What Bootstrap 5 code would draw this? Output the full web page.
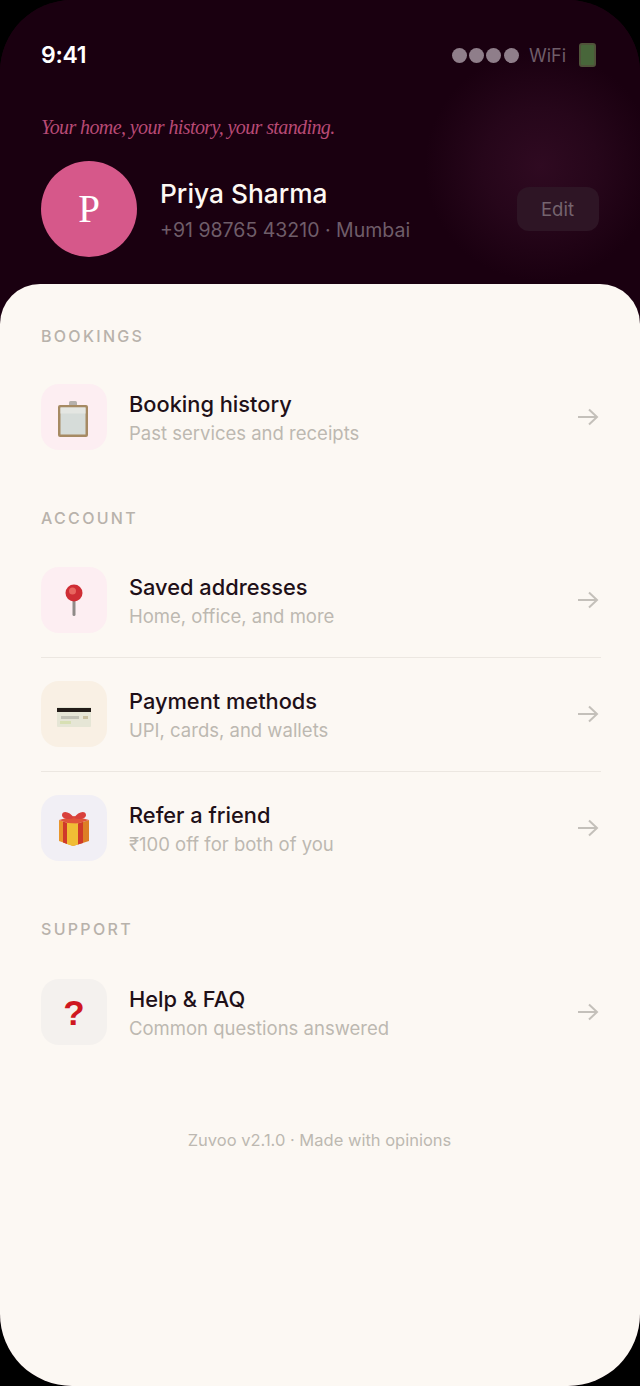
<!DOCTYPE html>
<html lang="en">
<head>
  <meta charset="UTF-8">
  <meta name="viewport" content="width=device-width, initial-scale=1.0">
  <title>Profile - Zuvoo</title>
  <link href="https://cdn.jsdelivr.net/npm/bootstrap@5.3.2/dist/css/bootstrap.min.css" rel="stylesheet">
  <style>
    html, body { height: 100%; }
    body { background: #000; font-family: "Inter", "Liberation Sans", sans-serif; }
    .phone-frame {
      width: 640px; height: 1386px; border-radius: 72px; overflow: hidden;
      background: #1a0010;
    }
    .profile-head {
      height: 284px; padding: 0 41px;
      background: radial-gradient(circle 115px at 540px 166px, #2f0a21 0%, #26061a 50%, #1a0010 100%);
    }
    .status-row { height: 110px; padding-top: 38px; color: #fff; }
    .status-time { font-size: 23px; font-weight: 600; line-height: 34px; letter-spacing: -.3px; }
    .status-icons { height: 34px; }
    .status-dot { width: 15px; height: 15px; border-radius: 50%; background: #8f7e8a; margin-right: 2.3px; }
    .status-wifi { font-size: 18px; color: #6f5d69; margin: 0 13px 0 8px; }
    .status-batt { width: 17px; height: 24px; margin-right: 3px; border-radius: 3px; background: #48663a; border: 2px solid #50533a; }
    .tagline { font-family: "Liberation Serif", serif; font-style: italic; font-size: 20px; letter-spacing: -.6px; line-height: 34px; color: #b84a75; margin-bottom: 17px; }
    .avatar-circle {
      width: 96px; height: 96px; border-radius: 50%; background: #d6588a; color: #fff;
      font-family: "Liberation Serif", serif; font-size: 39px; flex-shrink: 0;
    }
    .user-block { margin-left: 23px; padding-top: 4px; }
    .user-name { font-size: 26.300px; font-weight: 500; color: #fdf8f3; line-height: 34px; }
    .user-meta { font-size: 19.500px; color: #6f5d69; line-height: 30px; margin-top: 4px; }
    .edit-btn {
      width: 82px; height: 44px; border-radius: 12px; border: 0; padding: 1px 1px 0 0;
      background: #2e1525; color: #75646f; font-size: 18.500px;
    }
    .sheet {
      height: 1102px; background: #fcf8f3; border-radius: 40px 40px 0 0; padding: 40px 39px 0 41px;
    }
    .section-label { font-size: 16px; font-weight: 500; letter-spacing: 2.300px; line-height: 24px; color: #b8b2ab; margin-bottom: 12px; }
    .section-gap { margin-top: 32px; }
    .label-account { margin-bottom: 13px; }
    .label-support { margin-bottom: 14px; }
    .menu-row { height: 114px; padding: 24px 0; }
    .menu-row + .menu-row { border-top: 1px solid #ece7e1; padding-top: 23px; }
    .menu-icon { width: 66px; height: 66px; border-radius: 18px; margin-right: 22px; flex-shrink: 0; }
    .tint-pink { background: #fdeef2; }
    .tint-sand { background: #f9f0e4; }
    .tint-lilac { background: #f1eff5; }
    .tint-grey { background: #f4f1ee; }
    .menu-text { padding-top: 2px; }
    .menu-title { font-size: 21.800px; font-weight: 500; color: #1f1018; line-height: 30px; }
    .menu-sub { font-size: 18.500px; color: #bdb8b1; line-height: 28px; }
    .menu-arrow { margin-right: 2px; }
    .question-mark { font-family: "Liberation Sans", sans-serif; font-weight: 700; font-size: 35px; color: #cf1720; line-height: 1; }
    .nudge-clip { margin: 4px 3px 0 0; }
    .nudge-card { margin-top: 6px; }
    .foot-note { font-size: 16.500px; color: #bdb8b1; margin-top: 59px; line-height: 24px; padding-right: 3px; }
  </style>
</head>
<body>
  <div class="phone-frame">
    <!-- Dark header -->
    <div class="profile-head">
      <div class="status-row d-flex justify-content-between align-items-start">
        <span class="status-time">9:41</span>
        <div class="status-icons d-flex align-items-center">
          <span class="status-dot"></span>
          <span class="status-dot"></span>
          <span class="status-dot"></span>
          <span class="status-dot"></span>
          <span class="status-wifi">WiFi</span>
          <span class="status-batt"></span>
        </div>
      </div>
      <div class="tagline">Your home, your history, your standing.</div>
      <div class="d-flex align-items-center">
        <div class="avatar-circle d-flex align-items-center justify-content-center">P</div>
        <div class="user-block flex-grow-1">
          <div class="user-name">Priya Sharma</div>
          <div class="user-meta">+91 98765 43210 · Mumbai</div>
        </div>
        <button class="edit-btn" type="button">Edit</button>
      </div>
    </div>

    <!-- Menu sheet -->
    <div class="sheet">
      <div class="section-label">BOOKINGS</div>
      <div class="menu-row d-flex align-items-center">
        <div class="menu-icon tint-pink d-flex align-items-center justify-content-center">
          <svg class="nudge-clip" width="30" height="36" viewBox="0 0 30 36">
            <rect x="11" y="0" width="8" height="6" rx="1.500" fill="#b5b0ac"/>
            <rect x="0" y="4" width="30" height="32" rx="2" fill="#a68a63"/>
            <rect x="2.500" y="6.500" width="25" height="27" fill="#d6dcd9"/>
            <rect x="2.500" y="6.500" width="25" height="6" fill="#e4e6e2"/>
          </svg>
        </div>
        <div class="menu-text flex-grow-1">
          <div class="menu-title">Booking history</div>
          <div class="menu-sub">Past services and receipts</div>
        </div>
        <svg class="menu-arrow" width="21" height="18" viewBox="0 0 21 18" fill="none" stroke="#c4c0ba" stroke-width="2"><path d="M0 9h19M11 1.500l8 7.500-8 7.500"/></svg>
      </div>

      <div class="section-label section-gap label-account">ACCOUNT</div>
      <div class="menu-row d-flex align-items-center">
        <div class="menu-icon tint-pink d-flex align-items-center justify-content-center">
          <svg width="20" height="32" viewBox="0 0 20 32">
            <rect x="8.500" y="14" width="3" height="18" rx="1.500" fill="#8f8a88"/>
            <circle cx="10" cy="9" r="8.500" fill="#cf2d35"/>
            <circle cx="8.500" cy="7" r="3.500" fill="#e8655f"/>
          </svg>
        </div>
        <div class="menu-text flex-grow-1">
          <div class="menu-title">Saved addresses</div>
          <div class="menu-sub">Home, office, and more</div>
        </div>
        <svg class="menu-arrow" width="21" height="18" viewBox="0 0 21 18" fill="none" stroke="#c4c0ba" stroke-width="2"><path d="M0 9h19M11 1.500l8 7.500-8 7.500"/></svg>
      </div>
      <div class="menu-row d-flex align-items-center">
        <div class="menu-icon tint-sand d-flex align-items-center justify-content-center">
          <svg class="nudge-card" width="34" height="20" viewBox="0 0 34 20">
            <rect x="0" y="0" width="34" height="20" rx="1" fill="#e6e6d6"/>
            <rect x="0" y="1" width="34" height="4" fill="#231c18"/>
            <rect x="4" y="9" width="18" height="3" fill="#c2c2b6"/>
            <rect x="26" y="9" width="5" height="3" fill="#c8bf9f"/>
            <rect x="3" y="14" width="11" height="3" fill="#d8e0b4"/>
          </svg>
        </div>
        <div class="menu-text flex-grow-1">
          <div class="menu-title">Payment methods</div>
          <div class="menu-sub">UPI, cards, and wallets</div>
        </div>
        <svg class="menu-arrow" width="21" height="18" viewBox="0 0 21 18" fill="none" stroke="#c4c0ba" stroke-width="2"><path d="M0 9h19M11 1.500l8 7.500-8 7.500"/></svg>
      </div>
      <div class="menu-row d-flex align-items-center">
        <div class="menu-icon tint-lilac d-flex align-items-center justify-content-center">
          <svg width="32" height="36" viewBox="0 0 32 36">
            <path d="M1 10l14 5v21l-14-5z" fill="#e9962c"/>
            <path d="M15 15l16-5v21l-16 5z" fill="#dd7f26"/>
            <path d="M1 10l15-4 15 4-16 5z" fill="#e0543a"/>
            <path d="M5 11.500l4 1.500v21l-4-1.500zM20 13.500l5-1.500v21l-5 1.500z" fill="#cf3a2a"/>
            <path d="M9 13l11 .5v21l-5 1.500-6-2z" fill="#f0bd35"/>
            <path d="M16 8c-4-7-12-8-12-3 0 4 7 5 12 3 5 2 12 1 12-3 0-5-8-4-12 3z" fill="#d9403c"/>
          </svg>
        </div>
        <div class="menu-text flex-grow-1">
          <div class="menu-title">Refer a friend</div>
          <div class="menu-sub">₹100 off for both of you</div>
        </div>
        <svg class="menu-arrow" width="21" height="18" viewBox="0 0 21 18" fill="none" stroke="#c4c0ba" stroke-width="2"><path d="M0 9h19M11 1.500l8 7.500-8 7.500"/></svg>
      </div>

      <div class="section-label section-gap label-support">SUPPORT</div>
      <div class="menu-row d-flex align-items-center">
        <div class="menu-icon tint-grey d-flex align-items-center justify-content-center">
          <span class="question-mark">?</span>
        </div>
        <div class="menu-text flex-grow-1">
          <div class="menu-title">Help &amp; FAQ</div>
          <div class="menu-sub">Common questions answered</div>
        </div>
        <svg class="menu-arrow" width="21" height="18" viewBox="0 0 21 18" fill="none" stroke="#c4c0ba" stroke-width="2"><path d="M0 9h19M11 1.500l8 7.500-8 7.500"/></svg>
      </div>

      <div class="foot-note text-center">Zuvoo v2.1.0 · Made with opinions</div>
    </div>
  </div>

  <script src="https://cdn.jsdelivr.net/npm/bootstrap@5.3.2/dist/js/bootstrap.bundle.min.js"></script>
</body>
</html>
